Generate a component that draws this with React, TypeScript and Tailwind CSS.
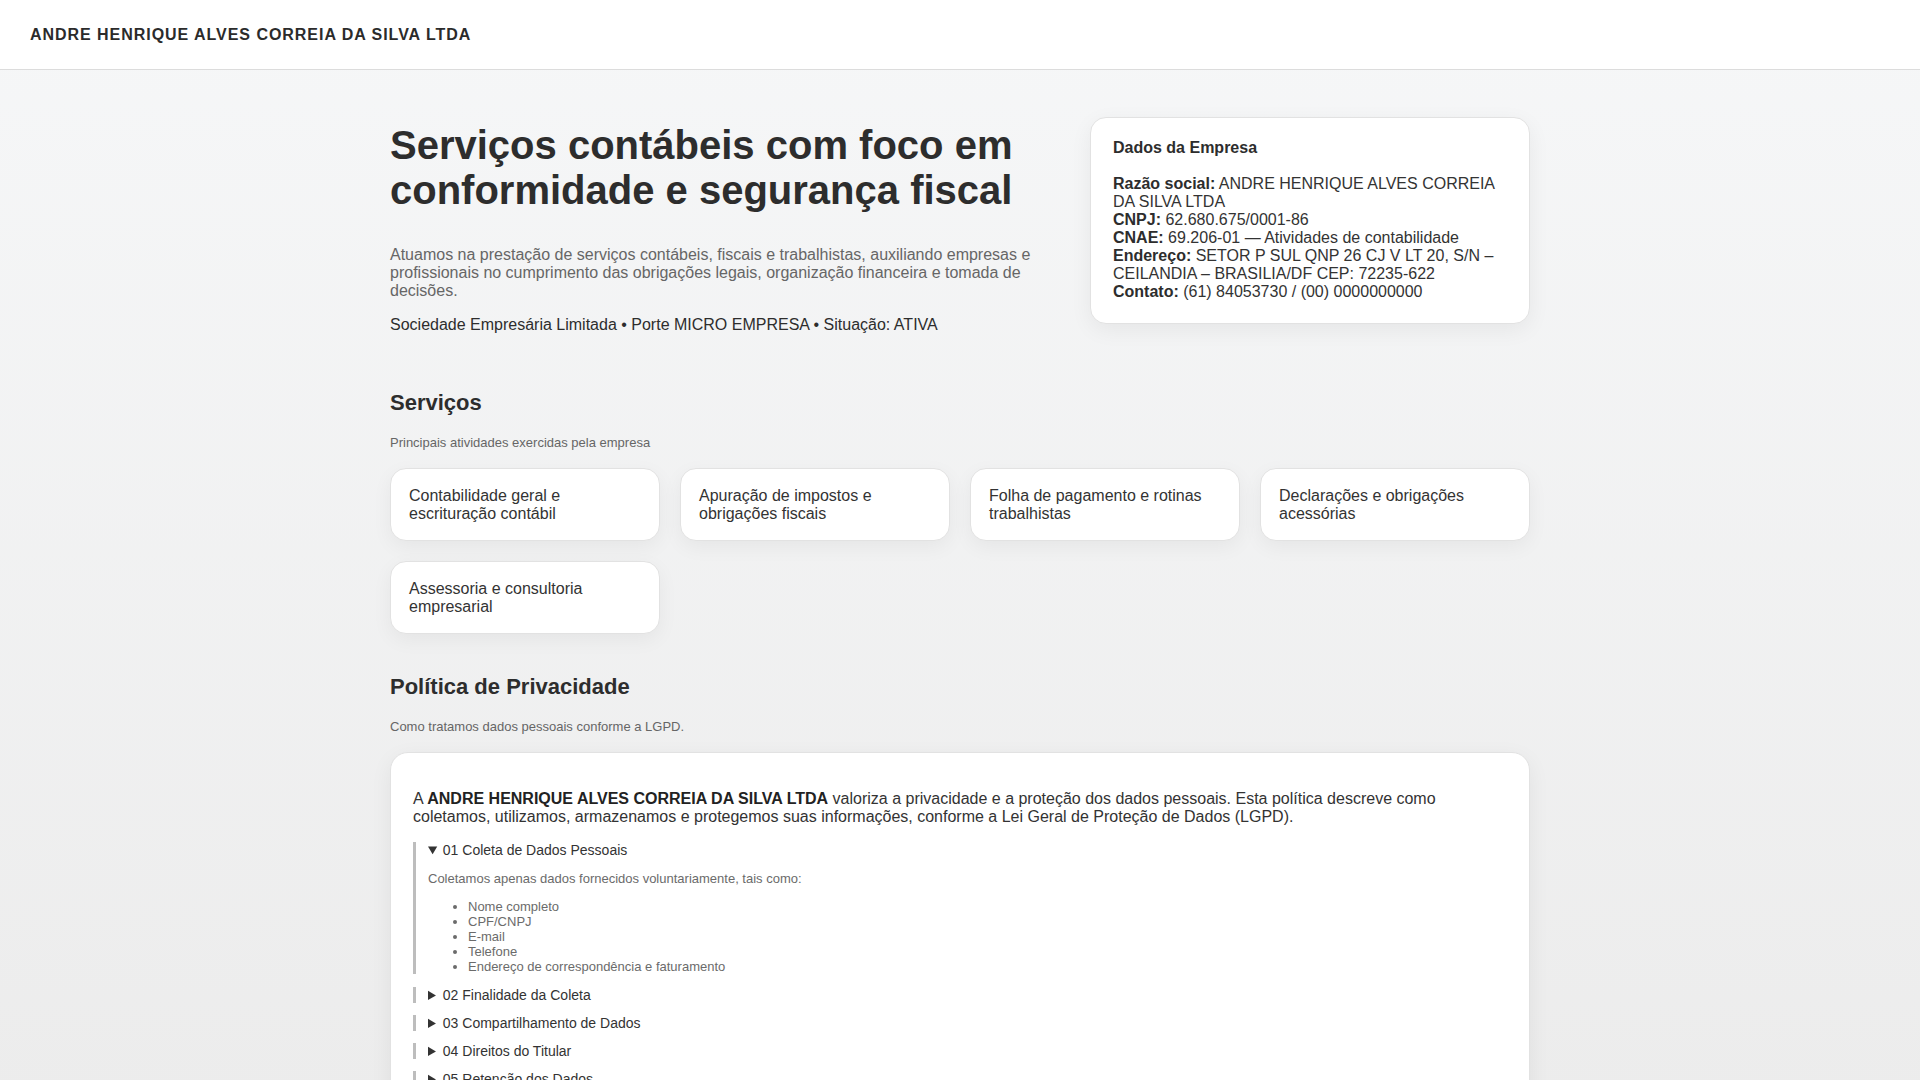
import React from "react";

const services = [
  "Contabilidade geral e escrituração contábil",
  "Apuração de impostos e obrigações fiscais",
  "Folha de pagamento e rotinas trabalhistas",
  "Declarações e obrigações acessórias",
  "Assessoria e consultoria empresarial",
];

const closedItems = [
  { t: "02 Finalidade da Coleta", body: "Os dados são utilizados exclusivamente para a prestação dos serviços contábeis contratados, emissão de documentos fiscais e cumprimento de obrigações legais." },
  { t: "03 Compartilhamento de Dados", body: "Os dados poderão ser compartilhados apenas com órgãos públicos, quando exigido por lei, ou com parceiros necessários à execução dos serviços." },
  { t: "04 Direitos do Titular", body: "O titular pode solicitar acesso, correção, atualização ou exclusão de seus dados pessoais a qualquer momento." },
  { t: "05 Retenção dos Dados", body: "Os dados são armazenados pelo período necessário ao cumprimento das obrigações legais e regulatórias." },
  { t: "06 Segurança da Informação", body: "Adotamos medidas técnicas e administrativas para proteger os dados contra acessos não autorizados." },
  { t: "07 Contato", body: "Dúvidas sobre esta política podem ser enviadas pelos canais de contato informados nesta página." },
];

export default function App() {
  return (
    <div className="min-h-screen bg-[linear-gradient(180deg,#f6f7f8_0px,#ececec_1100px)] font-['Liberation_Sans',Arial,sans-serif] text-[#333]">
      <header className="h-[70px] bg-white border-b border-[#dcdcdc] px-[30px] flex items-center">
        <div className="text-[16px] font-bold tracking-[0.06em] text-[#2b2b2b] leading-[18px]">
          ANDRE HENRIQUE ALVES CORREIA DA SILVA LTDA
        </div>
      </header>

      <main className="max-w-[1140px] mx-auto pt-[47px] pb-16">
        <section className="grid grid-cols-[1.5fr_1fr] gap-10 items-start">
          <div>
            <h1 className="mt-[6px] text-[40px] leading-[45px] font-bold text-[#2d2d2d]">
              Serviços contábeis com foco em conformidade e segurança fiscal
            </h1>
            <p className="mt-[33px] text-[16px] leading-[18px] text-[#666]">
              Atuamos na prestação de serviços contábeis, fiscais e trabalhistas, auxiliando empresas e profissionais no cumprimento das obrigações legais, organização financeira e tomada de decisões.
            </p>
            <p className="mt-[16px] text-[16px] leading-[18px] text-[#2d2d2d]">
              Sociedade Empresária Limitada • Porte MICRO EMPRESA • Situação: ATIVA
            </p>
          </div>
          <div className="bg-white border border-[#e2e2e2] rounded-[16px] shadow-[0_6px_22px_rgba(0,0,0,0.06)] pt-[21px] px-[22px] pb-[22px] text-[16px] leading-[18px] text-[#333]">
            <h3 className="font-bold text-[#2d2d2d] mb-[18px]">Dados da Empresa</h3>
            <div>
              <b className="text-[#2d2d2d]">Razão social:</b> ANDRE HENRIQUE ALVES CORREIA DA SILVA LTDA
            </div>
            <div>
              <b className="text-[#2d2d2d]">CNPJ:</b> 62.680.675/0001-86
            </div>
            <div>
              <b className="text-[#2d2d2d]">CNAE:</b> 69.206-01 — Atividades de contabilidade
            </div>
            <div>
              <b className="text-[#2d2d2d]">Endereço:</b> SETOR P SUL QNP 26 CJ V LT 20, S/N – CEILANDIA – BRASILIA/DF CEP: 72235-622
            </div>
            <div>
              <b className="text-[#2d2d2d]">Contato:</b> (61) 84053730 / (00) 0000000000
            </div>
          </div>
        </section>

        <section className="mt-[56px]">
          <h2 className="text-[22px] leading-[25px] font-bold text-[#2d2d2d]">Serviços</h2>
          <p className="mt-5 text-[13px] leading-[15px] text-[#666]">Principais atividades exercidas pela empresa</p>
          <div className="mt-[18px] grid grid-cols-4 gap-5">
            {services.map((s) => (
              <div
                key={s}
                className="bg-white border border-[#e2e2e2] rounded-[16px] shadow-[0_6px_20px_rgba(0,0,0,0.05)] pt-[18px] pb-[17px] px-[18px] text-[16px] leading-[18px] text-[#333]"
              >
                {s}
              </div>
            ))}
          </div>
        </section>

        <section className="mt-10">
          <h2 className="text-[22px] leading-[25px] font-bold text-[#2d2d2d]">Política de Privacidade</h2>
          <p className="mt-5 text-[13px] leading-[15px] text-[#666]">Como tratamos dados pessoais conforme a LGPD.</p>
          <div className="mt-[18px] bg-white border border-[#e2e2e2] rounded-[18px] shadow-[0_6px_22px_rgba(0,0,0,0.06)] px-[22px] pt-[21px] pb-[21px]">
            <p className="mt-4 text-[16px] leading-[18px] text-[#333]">
              A <b className="text-[#222]">ANDRE HENRIQUE ALVES CORREIA DA SILVA LTDA</b> valoriza a privacidade e a proteção dos dados pessoais. Esta política descreve como coletamos, utilizamos, armazenamos e protegemos suas informações, conforme a Lei Geral de Proteção de Dados (LGPD).
            </p>
            <div className="mt-4">
              <details open className="border-l-[3px] border-[#bdbdbd] pl-3 mb-[13px]">
                <summary className="cursor-pointer text-[14px] leading-[16px] text-[#333]">01 Coleta de Dados Pessoais</summary>
                <p className="mt-[13px] text-[13px] leading-[15px] text-[#6b6b6b]">
                  Coletamos apenas dados fornecidos voluntariamente, tais como:
                </p>
                <ul className="mt-[13px] pl-10 list-disc text-[13px] leading-[15px] text-[#6b6b6b]">
                  <li>Nome completo</li>
                  <li>CPF/CNPJ</li>
                  <li>E-mail</li>
                  <li>Telefone</li>
                  <li>Endereço de correspondência e faturamento</li>
                </ul>
              </details>
              {closedItems.map((it) => (
                <details key={it.t} className="border-l-[3px] border-[#bdbdbd] pl-3 mb-3">
                  <summary className="cursor-pointer text-[14px] leading-[16px] text-[#333]">{it.t}</summary>
                  <p className="mt-[13px] text-[13px] leading-[15px] text-[#6b6b6b]">{it.body}</p>
                </details>
              ))}
            </div>
          </div>
        </section>
      </main>

      <footer className="border-t border-[#dcdcdc] bg-white py-6 text-center text-[13px] text-[#666]">
        © ANDRE HENRIQUE ALVES CORREIA DA SILVA LTDA — CNPJ 62.680.675/0001-86
      </footer>
    </div>
  );
}
